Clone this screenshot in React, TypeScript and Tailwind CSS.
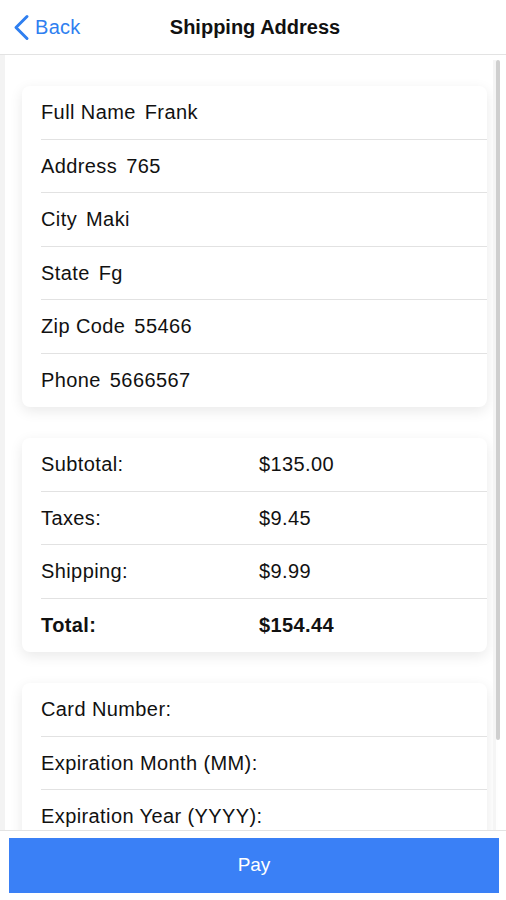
import React from "react";

const font = { fontFamily: '"Liberation Sans", Arial, sans-serif' };

function Row({ children, last }: { children: React.ReactNode; last?: boolean }) {
  return (
    <div className="pl-[19px]">
      <div className={`flex h-[53.5px] items-center text-[20px] tracking-[0.4px] text-[#111] ${last ? "" : "border-b border-[#e2e2e2]"}`}>
        {children}
      </div>
    </div>
  );
}

function Card({ children }: { children: React.ReactNode }) {
  return (
    <div className="ml-[22px] mr-[19px] rounded-[8px] bg-white shadow-[0_4px_14px_rgba(0,0,0,0.09)]">{children}</div>
  );
}

export default function App() {
  const address = [
    ["Full Name", "Frank"],
    ["Address", "765"],
    ["City", "Maki"],
    ["State", "Fg"],
    ["Zip Code", "55466"],
    ["Phone", "5666567"],
  ];
  const totals = [
    ["Subtotal:", "$135.00"],
    ["Taxes:", "$9.45"],
    ["Shipping:", "$9.99"],
  ];
  const card = ["Card Number:", "Expiration Month (MM):", "Expiration Year (YYYY):"];
  return (
    <div className="relative h-[900px] w-[506px] overflow-hidden bg-white" style={font}>
      <div className="relative flex h-[55px] items-center border-b border-[#e3e3e3] bg-white">
        <div className="absolute left-[13px] top-0 flex h-full items-center text-[#2f7ff0]">
          <svg width="17" height="27" viewBox="0 0 17 27" fill="none">
            <path d="M14 2.5 L3 13.5 L14 24.5" stroke="#2f7ff0" strokeWidth="3" strokeLinecap="round" strokeLinejoin="round" />
          </svg>
          <span className="ml-[5px] text-[20px] tracking-[0.3px]">Back</span>
        </div>
        <div className="w-full pl-[4px] text-center text-[20px] font-bold text-[#111]">Shipping Address</div>
      </div>

      <div className="relative h-[775px] overflow-hidden bg-white">
        <div className="absolute left-0 top-0 h-full w-[5px] bg-[#f3f3f3]" />
        <div className="absolute right-[6px] top-[5px] h-[680px] w-[4px] rounded-full bg-[#cfcfcf]" />
        <div className="absolute right-[10px] top-[5px] bottom-0 w-[3px] bg-[#f5f5f5]" />
        <div className="flex flex-col gap-[31px] pt-[31px]">
          <Card>
            {address.map(([k, v], i) => (
              <Row key={k} last={i === address.length - 1}>
                <span>{k}</span>
                <span className="ml-[9px]">{v}</span>
              </Row>
            ))}
          </Card>
          <Card>
            {totals.map(([k, v]) => (
              <Row key={k}>
                <span className="w-[218px]">{k}</span>
                <span>{v}</span>
              </Row>
            ))}
            <Row last>
              <span className="w-[218px] font-bold">Total:</span>
              <span className="font-bold">$154.44</span>
            </Row>
          </Card>
          <Card>
            {card.map((k) => (
              <Row key={k}>
                <span>{k}</span>
              </Row>
            ))}
            <div className="h-[60px]" />
          </Card>
        </div>
      </div>

      <div className="absolute bottom-0 left-0 h-[70px] w-full border-t border-[#e3e3e3] bg-white pl-[9px] pr-[7px] pt-[7px]">
        <button className="flex h-[55px] w-full items-center justify-center bg-[#3a80f6] text-[19px] text-white">
          Pay
        </button>
      </div>
    </div>
  );
}
